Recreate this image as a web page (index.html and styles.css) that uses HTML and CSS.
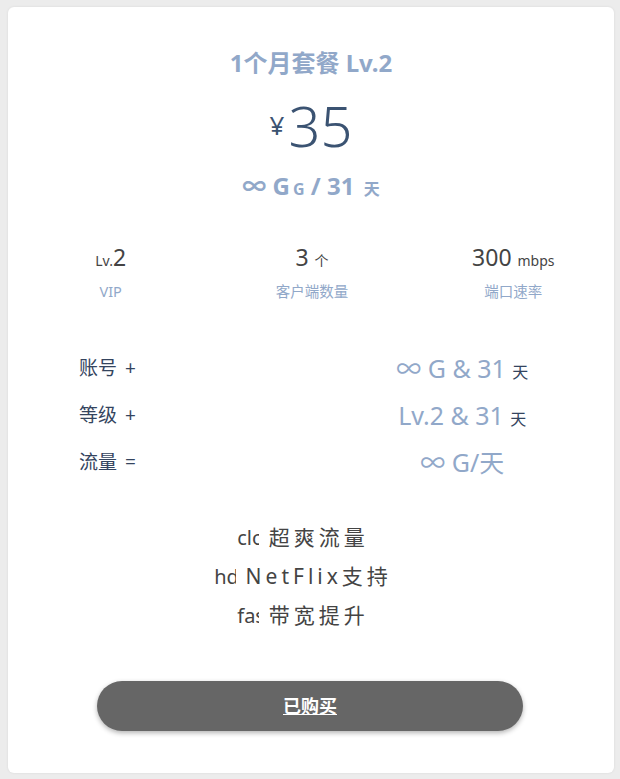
FILE: index.html
```html
<!DOCTYPE html>
<html lang="zh">
<head>
<meta charset="utf-8">
<link rel="stylesheet" href="styles.css">
</head>
<body>
<div class="card">
  <div class="title">1个月套餐 Lv.2</div>
  <div class="price"><span class="cur">¥</span><span class="num">35</span></div>
  <div class="sub">∞ G<small>G</small> / 31 <small>天</small></div>

  <div class="stats">
    <div class="stat"><div class="val"><small>Lv.</small>2</div><div class="lbl">VIP</div></div>
    <div class="stat"><div class="val">3 <small>个</small></div><div class="lbl">客户端数量</div></div>
    <div class="stat"><div class="val">300 <small>mbps</small></div><div class="lbl">端口速率</div></div>
  </div>

  <div class="list">
    <div class="k">账号 +</div><div class="v">∞ G &amp; 31 <small>天</small></div>
    <div class="k">等级 +</div><div class="v">Lv.2 &amp; 31 <small>天</small></div>
    <div class="k">流量 =</div><div class="v">∞ G/天</div>
  </div>

  <div class="features">
    <div class="feat"><span class="ico">cloud</span> 超爽流量</div>
    <div class="feat"><span class="ico">hd</span> NetFlix支持</div>
    <div class="feat"><span class="ico">fast</span> 带宽提升</div>
  </div>

  <div class="btnwrap"><a class="btn">已购买</a></div>
</div>
</body>
</html>
```
FILE: styles.css
```css
html, body { margin: 0; padding: 0; }
body {
  background: #ececec;
  padding: 7px 6px 6px 8px;
  font-family: "Noto Sans", "Noto Sans CJK SC", sans-serif;
}
.card {
  background: #fff;
  border-radius: 6px;
  height: 766px;
  box-sizing: border-box;
  padding-top: 38px;
  box-shadow: 0 0 3px rgba(0,0,0,0.08);
}
.title {
  text-align: center;
  font-size: 24px;
  font-weight: 700;
  color: #91a8c9;
  line-height: 36px;
}
.price {
  text-align: center;
  color: #3b5372;
  line-height: 64px;
  margin-top: 12px;
}
.cur { font-size: 26px; vertical-align: 12px; margin-right: 4px; }
.num { font-size: 56px; font-weight: 300; }
.sub {
  text-align: center;
  font-size: 24px;
  font-weight: 700;
  color: #91a8c9;
  line-height: 34px;
  margin-top: -4px;
}
.sub small { font-size: 16px; margin-left: 3px; }
.stats {
  display: grid;
  grid-template-columns: 1fr 1fr 1fr;
  margin-top: 36px;
  padding-left: 2px;
}
.stat { text-align: center; }
.val { font-size: 23px; color: #444; line-height: 30px; }
.val small { font-size: 14px; }
.lbl { font-size: 14.5px; color: #91a8c9; line-height: 18px; margin-top: 6px; }
.list {
  display: grid;
  grid-template-columns: 1fr 1fr;
  padding: 0 24px 0 71px;
  margin-top: 51px;
  row-gap: 13px;
  align-items: center;
}
.k { font-size: 19px; color: #34445e; line-height: 34px; height: 34px; word-spacing: 3px; }
.v { text-align: center; font-size: 25px; color: #91a8c9; line-height: 34px; height: 34px; }
.v small { font-size: 16px; color: #34445e; }
.features {
  margin-top: 39px;
  text-align: center;
  font-size: 21px;
  letter-spacing: 4px;
  color: #444;
}
.feat { line-height: 39px; padding-right: 16px; }
.ico {
  display: inline-block;
  width: 22px;
  overflow: hidden;
  white-space: nowrap;
  vertical-align: bottom;
  letter-spacing: 0;
  font-size: 20px;
}
.btnwrap { padding: 0 91px 0 89px; margin-top: 46px; }
.btn {
  display: block;
  height: 50px;
  line-height: 50px;
  border-radius: 25px;
  background: #666;
  color: #fff;
  text-align: center;
  font-size: 18px;
  font-weight: 700;
  text-decoration: underline;
  box-shadow: 0 2px 5px rgba(0,0,0,0.3);
}
```
